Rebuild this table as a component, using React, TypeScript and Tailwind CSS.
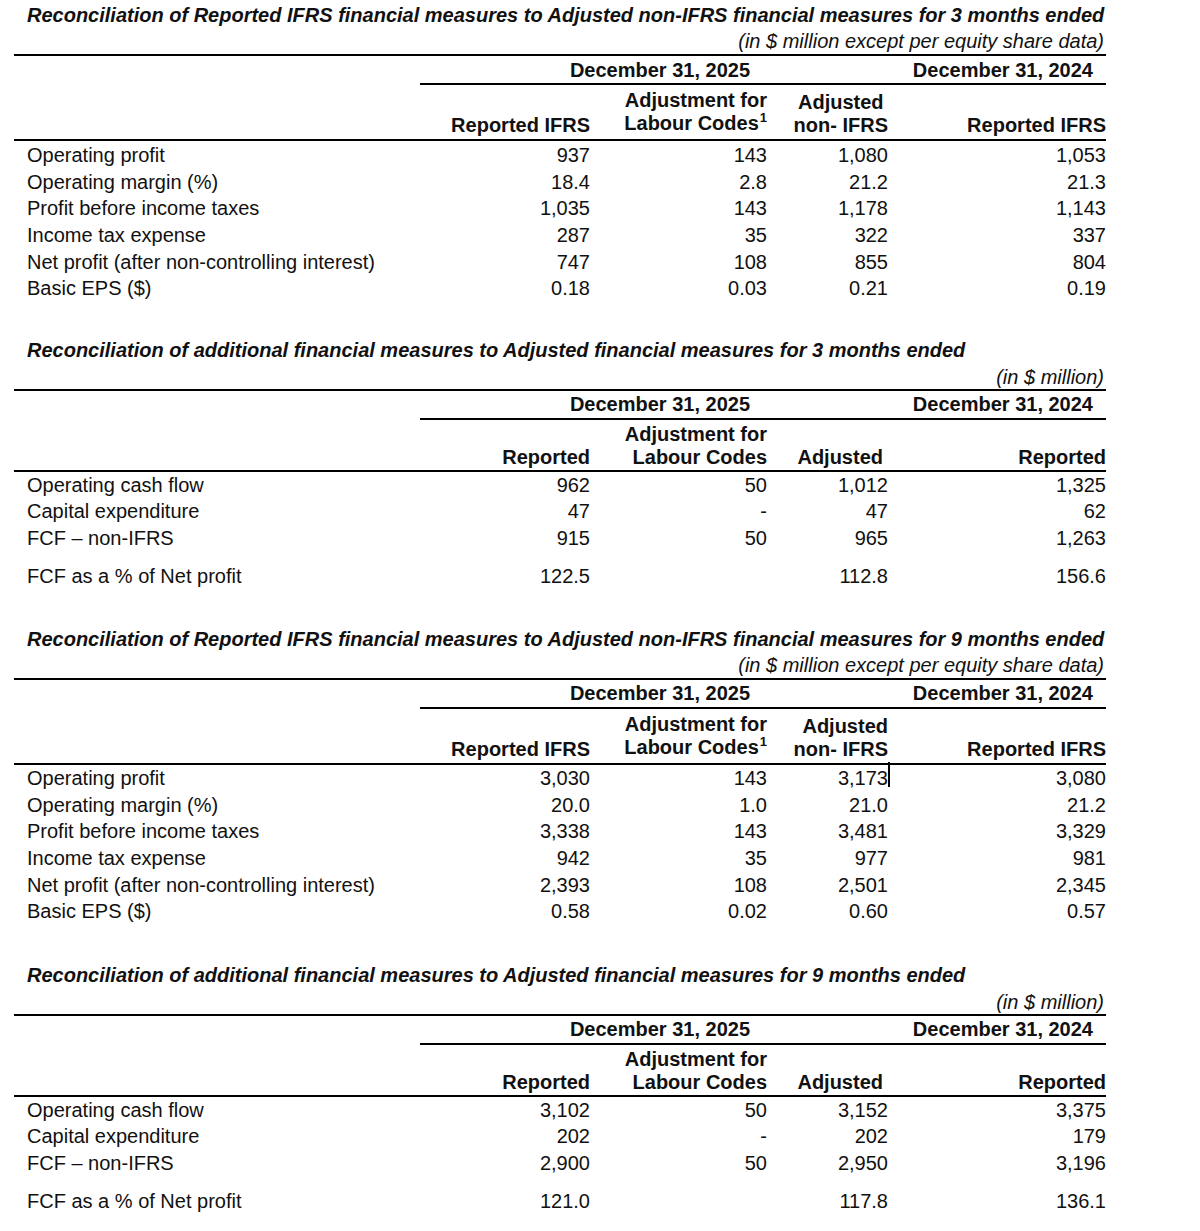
type Row = { label: string; v: [string, string, string, string]; gap?: boolean };

type Section = {
  title: string;
  unit: string;
  kind: "ifrs" | "cash";
  rows: Row[];
  marker?: boolean;
};

const sections: Section[] = [
  {
    title:
      "Reconciliation of Reported IFRS financial measures to Adjusted non-IFRS financial measures for 3 months ended",
    unit: "(in $ million except per equity share data)",
    kind: "ifrs",
    rows: [
      { label: "Operating profit", v: ["937", "143", "1,080", "1,053"] },
      { label: "Operating margin (%)", v: ["18.4", "2.8", "21.2", "21.3"] },
      { label: "Profit before income taxes", v: ["1,035", "143", "1,178", "1,143"] },
      { label: "Income tax expense", v: ["287", "35", "322", "337"] },
      { label: "Net profit (after non-controlling interest)", v: ["747", "108", "855", "804"] },
      { label: "Basic EPS ($)", v: ["0.18", "0.03", "0.21", "0.19"] },
    ],
  },
  {
    title:
      "Reconciliation of additional financial measures to Adjusted financial measures for 3 months ended",
    unit: "(in $ million)",
    kind: "cash",
    rows: [
      { label: "Operating cash flow", v: ["962", "50", "1,012", "1,325"] },
      { label: "Capital expenditure", v: ["47", "-", "47", "62"] },
      { label: "FCF \u2013 non-IFRS", v: ["915", "50", "965", "1,263"] },
      { label: "FCF as a % of Net profit", v: ["122.5", "", "112.8", "156.6"], gap: true },
    ],
  },
  {
    title:
      "Reconciliation of Reported IFRS financial measures to Adjusted non-IFRS financial measures for 9 months ended",
    unit: "(in $ million except per equity share data)",
    kind: "ifrs",
    marker: true,
    rows: [
      { label: "Operating profit", v: ["3,030", "143", "3,173", "3,080"] },
      { label: "Operating margin (%)", v: ["20.0", "1.0", "21.0", "21.2"] },
      { label: "Profit before income taxes", v: ["3,338", "143", "3,481", "3,329"] },
      { label: "Income tax expense", v: ["942", "35", "977", "981"] },
      { label: "Net profit (after non-controlling interest)", v: ["2,393", "108", "2,501", "2,345"] },
      { label: "Basic EPS ($)", v: ["0.58", "0.02", "0.60", "0.57"] },
    ],
  },
  {
    title:
      "Reconciliation of additional financial measures to Adjusted financial measures for 9 months ended",
    unit: "(in $ million)",
    kind: "cash",
    rows: [
      { label: "Operating cash flow", v: ["3,102", "50", "3,152", "3,375"] },
      { label: "Capital expenditure", v: ["202", "-", "202", "179"] },
      { label: "FCF \u2013 non-IFRS", v: ["2,900", "50", "2,950", "3,196"] },
      { label: "FCF as a % of Net profit", v: ["121.0", "", "117.8", "136.1"], gap: true },
    ],
  },
];

function Rule() {
  return <div className="h-[2px] bg-black" />;
}

function Table({ s, index }: { s: Section; index: number }) {
  const ifrs = s.kind === "ifrs";
  const first = index === 0;
  const spacing = first ? "" : index === 1 ? "mt-[35px]" : "mt-[37px]";

  return (
    <div className={spacing}>
      {/* Title + unit note */}
      <div className="h-[26px] pl-[13px] flex items-center font-bold italic whitespace-nowrap">
        {s.title}
      </div>
      <div className={`h-[26px] pr-[2px] flex items-center justify-end italic ${ifrs ? "" : "pt-[2px]"}`}>
        {s.unit}
      </div>
      <Rule />

      {/* Period headers */}
      <div className="flex h-[27px] items-center font-bold">
        <div className="w-[406px]" />
        <div className="w-[468px] pl-[12px] text-center">December 31, 2025</div>
        <div className="w-[218px] pr-[13px] text-right">December 31, 2024</div>
      </div>
      <div className="ml-[406px] h-[2px] bg-black" />

      {/* Column headers */}
      <div
        className={`flex items-end font-bold leading-[23px] ${
          ifrs ? "h-[54px] pb-[2px]" : "h-[50px] pb-[1px]"
        }`}
      >
        <div className="w-[406px]" />
        <div className="w-[170px] text-right">{ifrs ? "Reported IFRS" : "Reported"}</div>
        <div className="w-[177px] text-right">
          Adjustment for
          <br />
          Labour Codes
          {ifrs && <span className="text-[13px] relative -top-[8px] ml-[1px]">1</span>}
        </div>
        <div className="w-[121px] text-right">
          {ifrs ? (
            s.marker ? (
              <span>
                Adjusted
                <br />
                non- IFRS
              </span>
            ) : (
              <span className="inline-block text-center">
                Adjusted
                <br />
                non- IFRS
              </span>
            )
          ) : (
            <span className="pr-[5px]">Adjusted</span>
          )}
        </div>
        <div className="w-[218px] text-right">{ifrs ? "Reported IFRS" : "Reported"}</div>
      </div>
      <Rule />

      {/* Body */}
      <div className={first ? "pt-[1px]" : ""}>
        {s.rows.map((r, i) => (
          <div
            key={r.label}
            className={`flex h-[26.6px] items-center ${r.gap ? "mt-[11px]" : ""}`}
          >
            <div className="w-[406px] pl-[13px] whitespace-nowrap">{r.label}</div>
            <div className="w-[170px] text-right">{r.v[0]}</div>
            <div className="w-[177px] text-right">{r.v[1]}</div>
            <div className="w-[121px] text-right relative">
              {r.v[2]}
              {s.marker && i === 0 && (
                <div className="absolute -right-[2px] -top-[1px] h-[25px] w-[2px] bg-black" />
              )}
            </div>
            <div className="w-[218px] text-right">{r.v[3]}</div>
          </div>
        ))}
      </div>
    </div>
  );
}

export default function App() {
  return (
    <div className="w-[1200px] h-[1231px] bg-white text-[#111] font-['Liberation_Sans',Arial,sans-serif] text-[20px] overflow-hidden">
      <div className="ml-[14px] w-[1092px] pt-[2px]">
        {sections.map((s, i) => (
          <Table key={i} s={s} index={i} />
        ))}
      </div>
    </div>
  );
}
